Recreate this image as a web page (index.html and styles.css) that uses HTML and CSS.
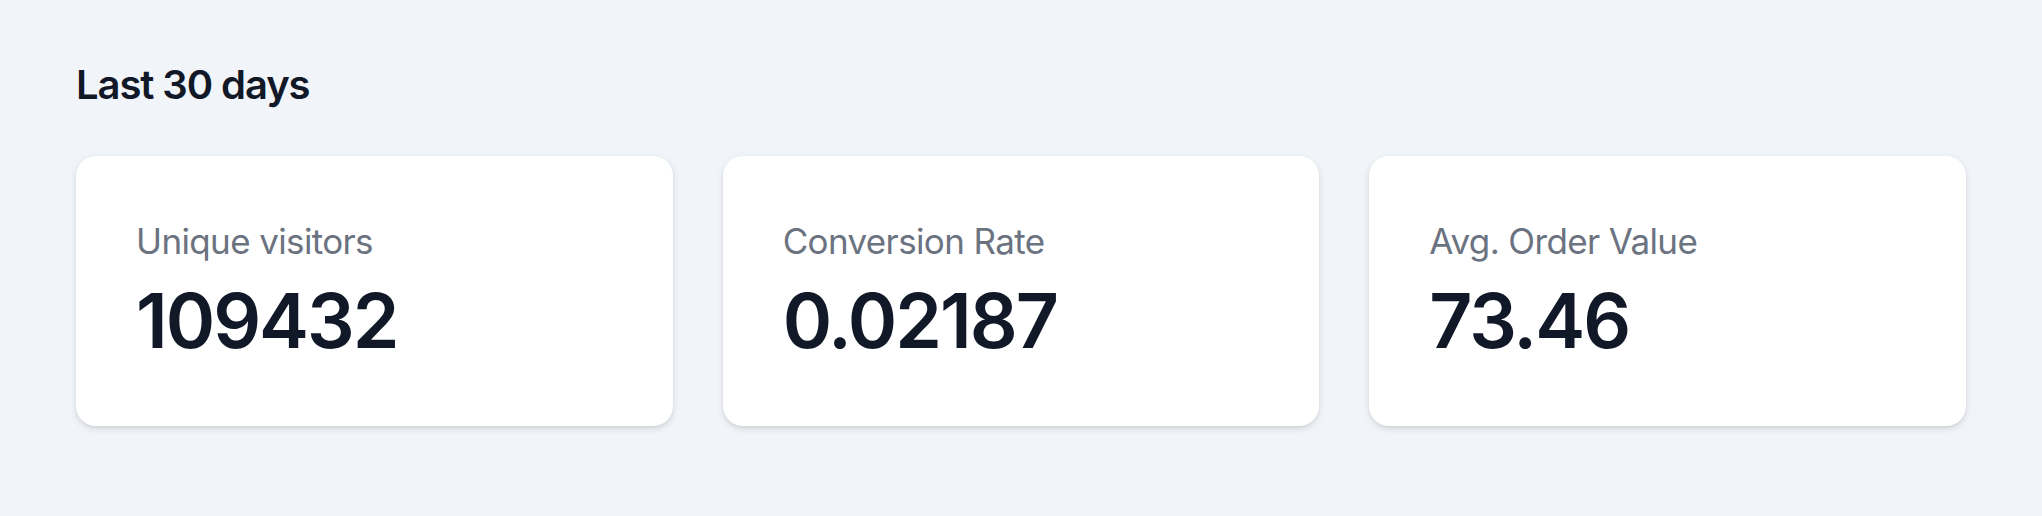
FILE: index.html
```html
<!DOCTYPE html>
<html>
<head>
<meta charset="utf-8">
<link rel="stylesheet" href="styles.css">
</head>
<body>
<div class="page">
  <h3 class="title">Last 30 days</h3>
  <dl class="stats">
    <div class="card">
      <dt class="label">Unique visitors</dt>
      <dd class="value">109432</dd>
    </div>
    <div class="card">
      <dt class="label">Conversion Rate</dt>
      <dd class="value">0.02187</dd>
    </div>
    <div class="card">
      <dt class="label">Avg. Order Value</dt>
      <dd class="value">73.46</dd>
    </div>
  </dl>
</div>
</body>
</html>
```

FILE: styles.css
```css
html, body {
  margin: 0;
  padding: 0;
  background: #f1f4f9;
}
body {
  font-family: Inter, "Liberation Sans", sans-serif;
  width: 2042px;
  height: 516px;
  overflow: hidden;
}
.page {
  padding: 55px 76px 0 76px;
}
.title {
  margin: 0;
  font-size: 40px;
  line-height: 60px;
  font-weight: 600;
  letter-spacing: -0.027em;
  color: #111827;
}
.stats {
  margin: 41px 0 0 0;
  display: grid;
  grid-template-columns: repeat(3, 1fr);
  gap: 50px;
}
.card {
  background: #fff;
  border-radius: 20px;
  padding: 60px;
  box-shadow: 0 2.5px 7.5px 0 rgba(0,0,0,0.1), 0 2.5px 5px -2.5px rgba(0,0,0,0.1);
  overflow: hidden;
}
.label {
  margin: 0;
  font-size: 35px;
  line-height: 50px;
  font-weight: 400;
  letter-spacing: -0.018em;
  color: #6b7280;
  white-space: nowrap;
}
.value {
  margin: 10px 0 0 0;
  font-size: 75px;
  line-height: 90px;
  font-weight: 600;
  letter-spacing: -0.027em;
  color: #111827;
}
```
